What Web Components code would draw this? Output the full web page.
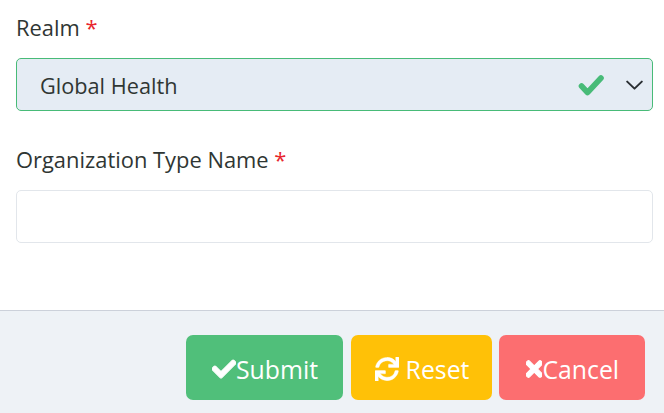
<!DOCTYPE html>
<html>
<head>
<meta charset="utf-8">
<title>Organization Type</title>
<style>
  html, body { margin: 0; padding: 0; background: #fff; }
  body { font-family: "Open Sans", "Noto Sans", sans-serif; color: #2f3633; overflow: hidden; }
</style>
</head>
<body>
<org-form>
  <form-field label="Realm">
    <select-box value="Global Health"></select-box>
  </form-field>
  <form-field label="Organization Type Name">
    <text-box></text-box>
  </form-field>
  <action-button slot="actions" kind="submit" icon="check">Submit</action-button>
  <action-button slot="actions" kind="reset" icon="sync">Reset</action-button>
  <action-button slot="actions" kind="cancel" icon="times">Cancel</action-button>
</org-form>

<script>
var ICONS = {
  check: { box: "0 0 512 512", d: "M173.898 439.404l-166.4-166.4c-9.997-9.997-9.997-26.206 0-36.204l36.203-36.204c9.997-9.998 26.207-9.998 36.204 0L192 312.69 432.095 72.596c9.997-9.997 26.207-9.997 36.204 0l36.203 36.204c9.997 9.997 9.997 26.206 0 36.204l-294.4 294.401c-9.998 9.997-26.207 9.997-36.204-.001z" },
  sync: { box: "0 0 512 512", d: "M440.65 12.57l4 82.77A247.16 247.16 0 0 0 255.83 8C134.73 8 33.91 94.92 12.29 209.82A12 12 0 0 0 24.09 224h49.05a12 12 0 0 0 11.67-9.26 175.91 175.91 0 0 1 317-56.94l-101.46-4.86a12 12 0 0 0-12.57 12v47.41a12 12 0 0 0 12 12H500a12 12 0 0 0 12-12V12a12 12 0 0 0-12-12h-47.37a12 12 0 0 0-11.98 12.57zM255.83 432a175.61 175.61 0 0 1-146-77.8l101.8 4.87a12 12 0 0 0 12.57-12v-47.4a12 12 0 0 0-12-12H12a12 12 0 0 0-12 12V500a12 12 0 0 0 12 12h47.35a12 12 0 0 0 12-12.6l-4.15-82.57A247.17 247.17 0 0 0 255.83 504c121.11 0 221.93-86.92 243.55-201.82a12 12 0 0 0-11.8-14.18h-49.05a12 12 0 0 0-11.67 9.26A175.86 175.86 0 0 1 255.83 432z" },
  times: { box: "0 0 352 512", d: "M242.72 256l100.07-100.07c12.28-12.28 12.28-32.19 0-44.48l-22.24-22.24c-12.28-12.28-32.19-12.28-44.48 0L176 189.28 75.93 89.21c-12.28-12.28-32.19-12.28-44.48 0L9.21 111.45c-12.28 12.28-12.28 32.19 0 44.48L109.28 256 9.21 356.07c-12.28 12.28-12.28 32.19 0 44.48l22.24 22.24c12.28 12.28 32.2 12.28 44.48 0L176 322.72l100.07 100.07c12.28 12.28 32.2 12.28 44.48 0l22.24-22.24c12.28-12.28 12.28-32.19 0-44.48L242.72 256z" }
};

class OrgForm extends HTMLElement {
  constructor() {
    super();
    this.attachShadow({ mode: "open" });
    this.shadowRoot.innerHTML = `
      <style>
        :host { display: flex; flex-direction: column; width: 664px; height: 413px; }
        .body { height: 297px; padding: 13px 11px 0 16px; display: flex; flex-direction: column; gap: 34px; }
        .footer {
          flex: 1;
          background: #eef2f6;
          border-top: 1px solid #ccd1da;
          padding: 24px 19px 0 0;
          display: flex;
          justify-content: flex-end;
          align-items: flex-start;
          gap: 7px;
        }
      </style>
      <div class="body"><slot></slot></div>
      <div class="footer"><slot name="actions"></slot></div>
    `;
  }
}
customElements.define("org-form", OrgForm);

class FormField extends HTMLElement {
  constructor() {
    super();
    this.attachShadow({ mode: "open" });
    this.shadowRoot.innerHTML = `
      <style>
        :host { display: flex; flex-direction: column; gap: 15px; }
        label { display: block; font-size: 21.9px; line-height: 30px; height: 30px; color: #2f3633; }
        .req { color: #e8262d; }
      </style>
      <label><span class="text"></span> <span class="req">*</span></label>
      <slot></slot>
    `;
  }

  connectedCallback() {
    this.shadowRoot.querySelector(".text").textContent = this.getAttribute("label");
  }
}
customElements.define("form-field", FormField);

class SelectBox extends HTMLElement {
  constructor() {
    super();
    this.attachShadow({ mode: "open" });
    this.shadowRoot.innerHTML = `
      <style>
        :host {
          display: flex;
          align-items: center;
          box-sizing: border-box;
          height: 53px;
          padding: 0 9px 0 23px;
          background: #e5ecf4;
          border: 1px solid #48bb78;
          border-radius: 5px;
          font-size: 21.7px;
          color: #2f3633;
        }
        .value { flex: 1; padding-top: 2px; }
        .ok { width: 27px; height: 24px; margin-right: 22px; display: block; }
        .arrow { width: 17px; height: 12px; display: block; }
      </style>
      <span class="value"></span>
      <svg class="ok" viewBox="0 0 27 24"><path d="M4.5 13 10.5 19.5 24 5" fill="none" stroke="#48bb78" stroke-width="5.6" stroke-linecap="round" stroke-linejoin="round"/></svg>
      <svg class="arrow" viewBox="0 0 17 12"><path d="M1.2 2.6 8.5 9.6 15.8 2.6" fill="none" stroke="#2a2f33" stroke-width="2" stroke-linecap="round" stroke-linejoin="round"/></svg>
    `;
  }

  connectedCallback() {
    this.shadowRoot.querySelector(".value").textContent = this.getAttribute("value");
  }
}
customElements.define("select-box", SelectBox);

class TextBox extends HTMLElement {
  constructor() {
    super();
    this.attachShadow({ mode: "open" });
    this.shadowRoot.innerHTML = `
      <style>
        :host { display: block; box-sizing: border-box; height: 53px; }
        input {
          display: block;
          box-sizing: border-box;
          width: 100%;
          height: 100%;
          background: #fff;
          border: 1px solid #e2e6eb;
          border-radius: 5px;
          outline: none;
        }
      </style>
      <input type="text">
    `;
  }
}
customElements.define("text-box", TextBox);

class ActionButton extends HTMLElement {
  constructor() {
    super();
    this.attachShadow({ mode: "open" });
    this.shadowRoot.innerHTML = `
      <style>
        :host {
          display: inline-flex;
          align-items: center;
          justify-content: center;
          box-sizing: border-box;
          height: 65px;
          padding: 2px 0 0 1px;
          border-radius: 7px;
          color: #fff;
          font-size: 24.8px;
          cursor: pointer;
        }
        :host([kind="submit"]) { width: 157px; background: #50bf7a; margin-right: 1px; }
        :host([kind="reset"]) { width: 141px; background: #ffc107; }
        :host([kind="cancel"]) { width: 146px; background: #fc6e70; }
        svg { height: 24px; width: auto; fill: #fff; stroke: #fff; stroke-width: 24; display: block; flex: none; }
        :host([kind="reset"]) svg { margin-right: 7px; stroke-width: 8; }
      </style>
      <svg></svg><slot></slot>
    `;
  }

  connectedCallback() {
    var icon = ICONS[this.getAttribute("icon")];
    var svg = this.shadowRoot.querySelector("svg");
    svg.setAttribute("viewBox", icon.box);
    svg.innerHTML = '<path d="' + icon.d + '"></path>';
  }
}
customElements.define("action-button", ActionButton);
</script>
</body>
</html>
